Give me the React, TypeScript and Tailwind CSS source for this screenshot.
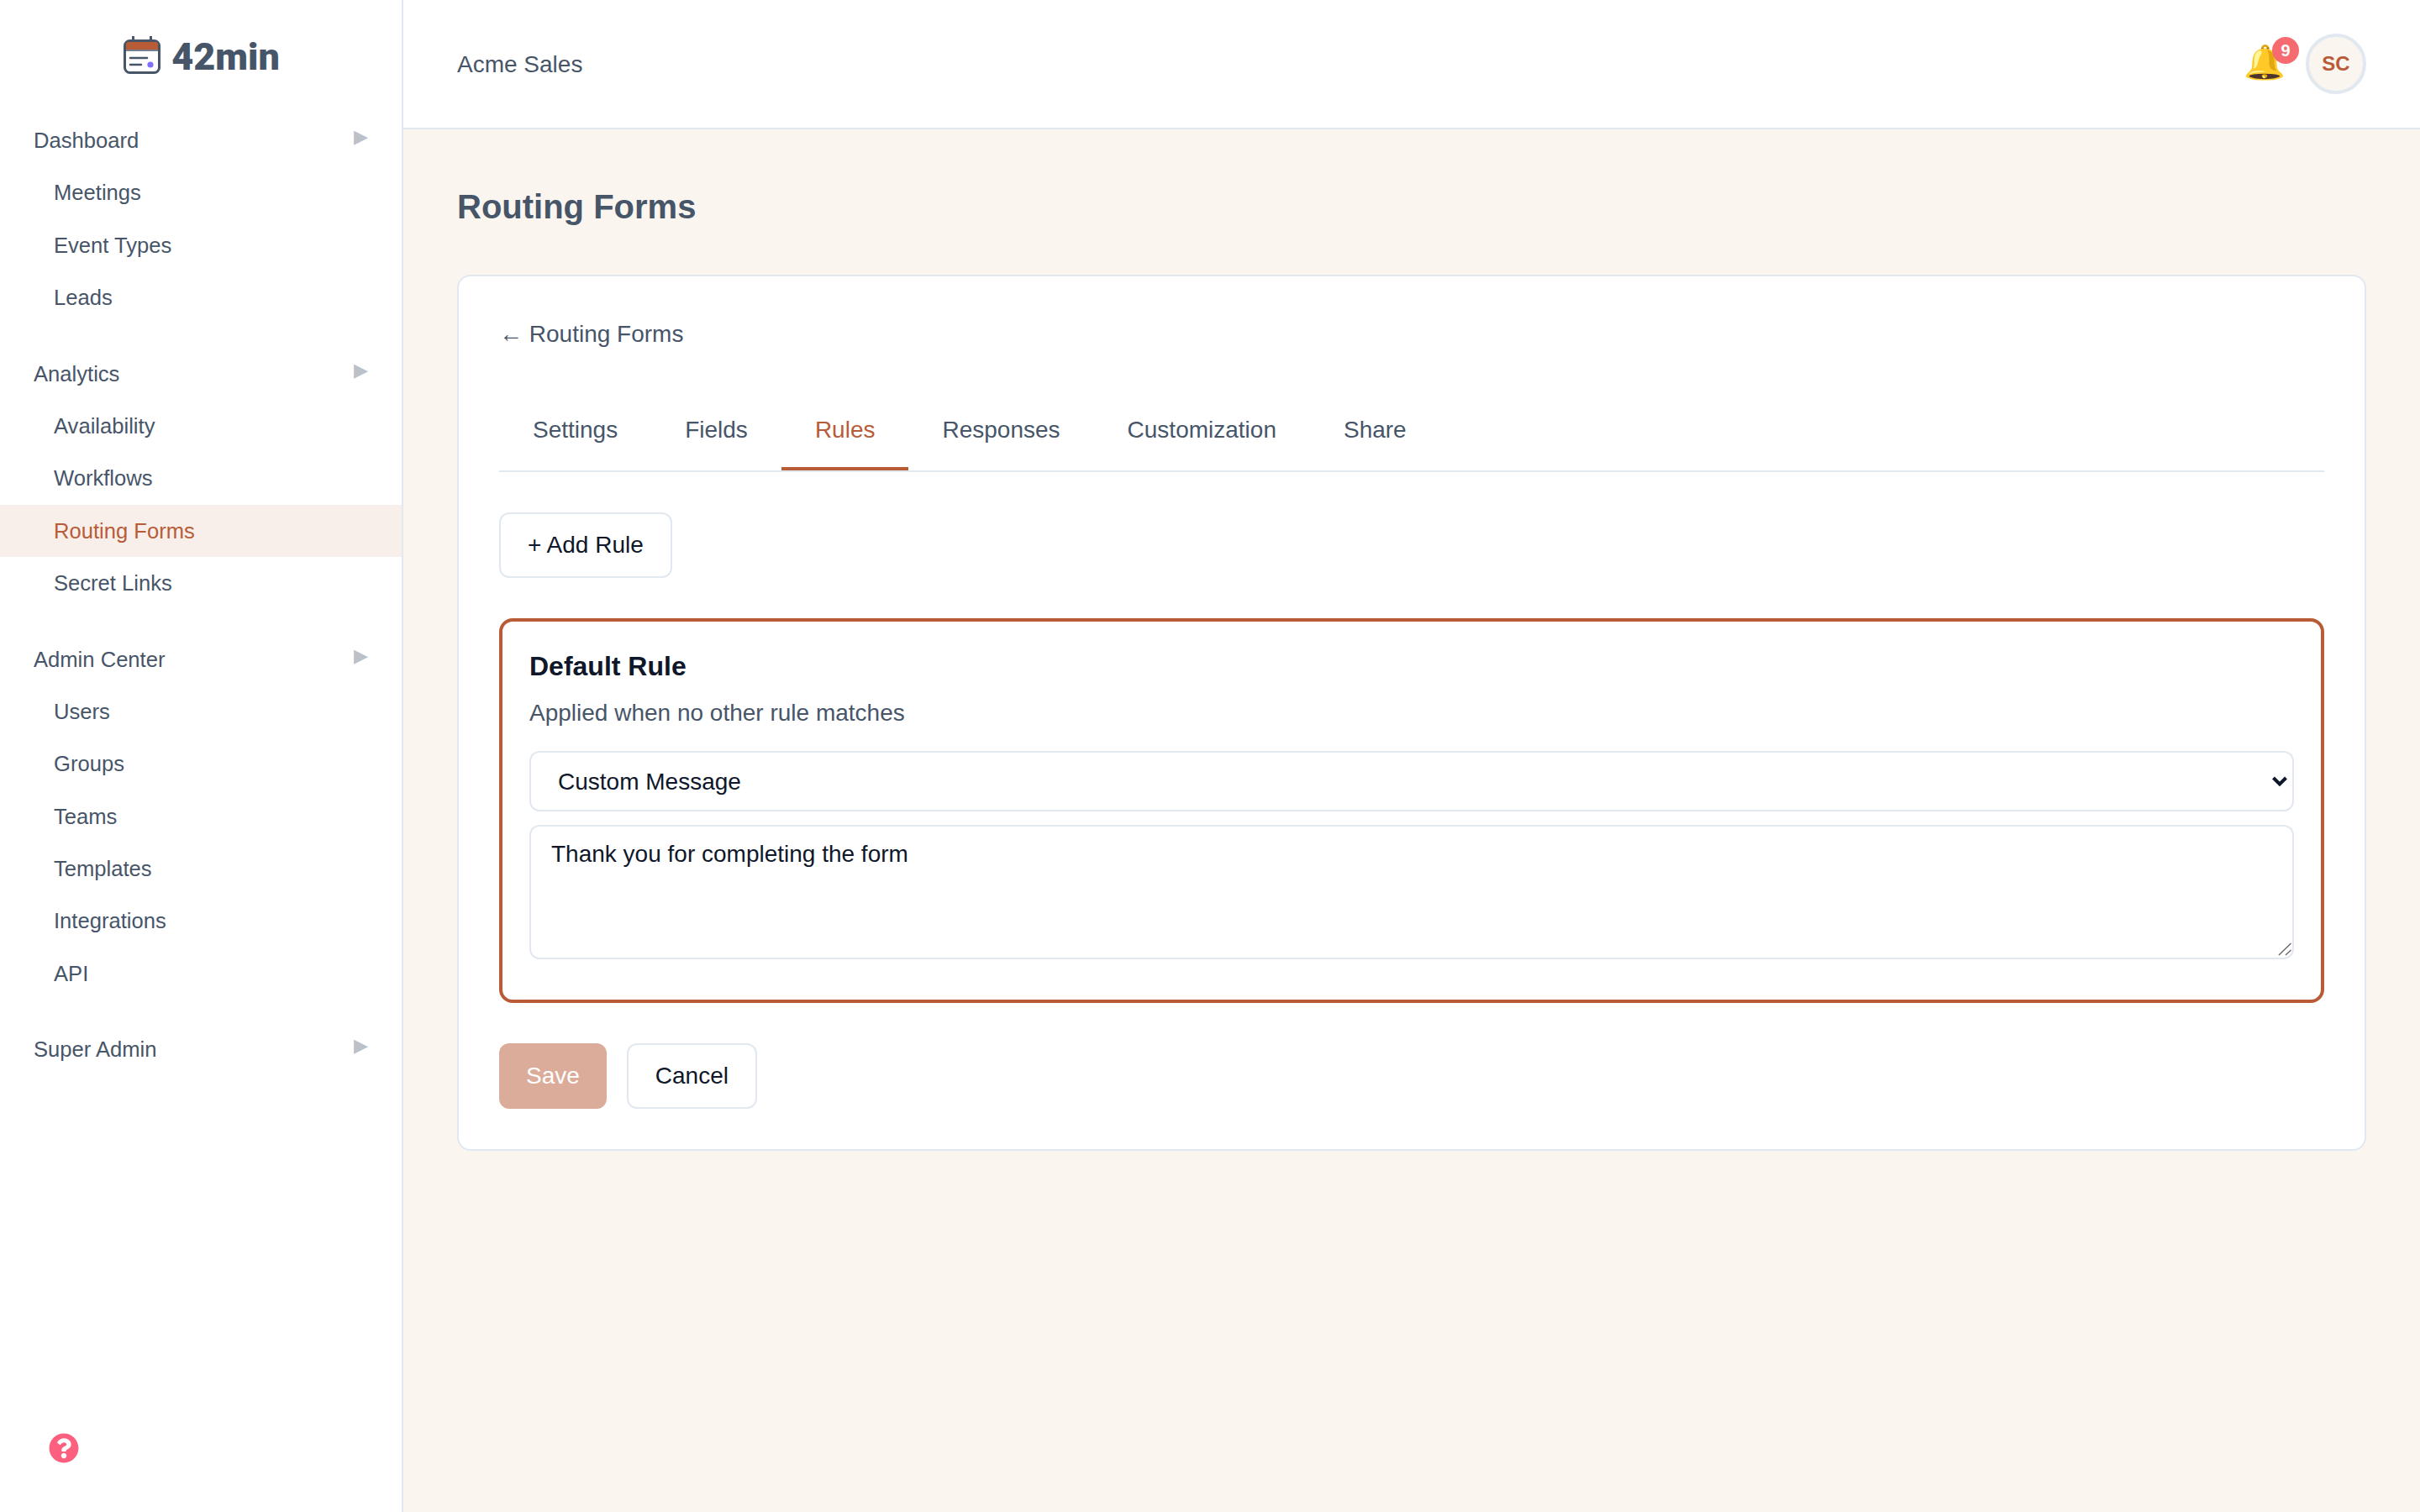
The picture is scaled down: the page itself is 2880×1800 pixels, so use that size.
import { FaQuestionCircle } from "react-icons/fa";

function Row({ label, active, sub }: { label: string; active?: boolean; sub?: boolean }) {
  return (
    <div
      className={
        "flex h-[62.4px] items-center justify-between text-[25.6px] " +
        (sub ? "pl-[64px] " : "pl-[40px] ") +
        (active ? "bg-[#f8efeb] text-[#b85c38]" : "text-[#475569]")
      }
    >
      <span>{label}</span>
      {!sub && <span className="mb-[8px] pr-[40px] text-[22px] leading-none text-[#bcc0c8]">▶</span>}
    </div>
  );
}

function Group({ title, items, active }: { title: string; items: string[]; active?: string }) {
  return (
    <div className="mb-[28px]">
      <Row label={title} />
      {items.map((i) => (
        <Row key={i} label={i} sub active={i === active} />
      ))}
    </div>
  );
}

const tabs = ["Settings", "Fields", "Rules", "Responses", "Customization", "Share"];

export default function App() {
  return (
    <div className="flex h-screen bg-[#faf5ef] font-['Liberation_Sans',sans-serif] text-[#0f172a]">
      <aside className="relative w-[480px] shrink-0 border-r-2 border-[#e2e8f0] bg-white">
        <div className="flex h-[136px] items-start justify-center pt-[43px] pl-[2px]">
          <svg width="44" height="45" viewBox="0 0 44 45" className="mr-[13px]">
            <rect x="1.5" y="5.5" width="41" height="38" rx="6" fill="#fff" stroke="#475569" strokeWidth="3" />
            <path d="M3 16V10a3 3 0 0 1 3-3h32a3 3 0 0 1 3 3v6z" fill="#b85c38" />
            <path d="M3 17h38" stroke="#475569" strokeWidth="1.5" />
            <path d="M11.5 0.5v5M32.5 0.5v5" stroke="#475569" strokeWidth="3" strokeLinecap="round" />
            <path d="M8 26h20M8 34h13" stroke="#475569" strokeWidth="2.5" strokeLinecap="round" />
            <circle cx="32" cy="34" r="3.6" fill="#7f6ffa" />
          </svg>
          <span className="mt-[2px] text-[45px] leading-[46px] font-black text-[#475569] font-['Roboto',sans-serif]">42min</span>
        </div>
        <Group title="Dashboard" items={["Meetings", "Event Types", "Leads"]} />
        <Group title="Analytics" items={["Availability", "Workflows", "Routing Forms", "Secret Links"]} active="Routing Forms" />
        <Group title="Admin Center" items={["Users", "Groups", "Teams", "Templates", "Integrations", "API"]} />
        <Group title="Super Admin" items={[]} />
        <FaQuestionCircle className="absolute bottom-[58px] left-[58px] text-[#fd5f7f]" size={36} />
      </aside>
      <div className="flex min-w-0 flex-1 flex-col">
        <header className="flex h-[154px] shrink-0 items-center justify-between border-b-2 border-[#e2e8f0] bg-white px-[64px]">
          <span className="pt-[2px] text-[28px] text-[#475569]">Acme Sales</span>
          <div className="flex items-center gap-[8px]">
            <div className="relative flex h-[72px] w-[64px] items-center justify-center pr-[18px] pb-[4px]">
              <span className="text-[40px] leading-none">🔔</span>
              <span className="absolute top-[4px] right-[0px] flex h-[32px] w-[32px] items-center justify-center rounded-full bg-[#f56b6f] text-[20px] font-bold text-white">9</span>
            </div>
            <div className="flex h-[72px] w-[72px] items-center justify-center rounded-full border-4 border-[#e2e8f0] bg-[#faf5ef] text-[24px] font-bold text-[#b85c38]">SC</div>
          </div>
        </header>
        <main className="flex-1 p-[64px]">
          <h1 className="mb-[53px] text-[40px] leading-[56px] font-bold text-[#475569]">Routing Forms</h1>
          <section className="rounded-[16px] border-2 border-[#e2e8f0] bg-white p-[48px]">
            <div className="mb-[41px] text-[28px] leading-[42px] text-[#475569]">← Routing Forms</div>
            <div className="mb-[48px] flex border-b-2 border-[#e2e8f0]">
              {tabs.map((t) => (
                <div
                  key={t}
                  className={
                    "flex h-[100px] items-center border-b-4 px-[40px] pt-[7px] text-[28px] " +
                    (t === "Rules" ? "border-[#b85c38] text-[#b85c38]" : "border-transparent text-[#475569]")
                  }
                >
                  {t}
                </div>
              ))}
            </div>
            <button className="mb-[48px] block h-[78px] rounded-[12px] border-2 border-[#e2e8f0] bg-white px-[32px] text-[28px] text-[#0f172a]">+ Add Rule</button>
            <div className="mb-[48px] rounded-[16px] border-4 border-[#b85c38] p-[32px]">
              <h2 className="mb-[14px] text-[32px] leading-[42px] font-bold text-[#0f172a]">Default Rule</h2>
              <p className="mb-[24px] text-[28px] leading-[42px] text-[#475569]">Applied when no other rule matches</p>
              <div className="relative mb-[16px]">
                <select defaultValue="Custom Message" className="block h-[72px] w-full appearance-none rounded-[12px] border-2 border-[#e2e8f0] bg-white px-[32px] pt-[2px] text-[28px] text-[#0f172a]">
                  <option>Custom Message</option>
                </select>
                <svg width="20" height="14" viewBox="0 0 20 14" className="pointer-events-none absolute top-[29px] right-[7px]">
                  <path d="M2.5 3 10 10.5 17.5 3" fill="none" stroke="#0f172a" strokeWidth="4" />
                </svg>
              </div>
              <div className="relative mb-[16px]">
                <textarea
                  defaultValue="Thank you for completing the form"
                  className="block h-[160px] w-full resize-none rounded-[12px] border-2 border-[#e2e8f0] bg-white px-[24px] pt-[17px] pb-[15px] text-[28px] leading-[32px] text-[#0f172a]"
                />
                <svg width="16" height="16" viewBox="0 0 16 16" className="pointer-events-none absolute right-[3px] bottom-[4px]">
                  <path d="M1 15 15.5 1M9 15 15.5 9" fill="none" stroke="#6b6b6b" strokeWidth="1.5" />
                </svg>
              </div>
            </div>
            <div className="flex gap-[24px]">
              <button className="h-[78px] rounded-[12px] bg-[#b85c38] px-[32px] text-[28px] text-white opacity-50">Save</button>
              <button className="h-[78px] rounded-[12px] border-2 border-[#e2e8f0] bg-white px-[32px] text-[28px] text-[#0f172a]">Cancel</button>
            </div>
          </section>
        </main>
      </div>
    </div>
  );
}
